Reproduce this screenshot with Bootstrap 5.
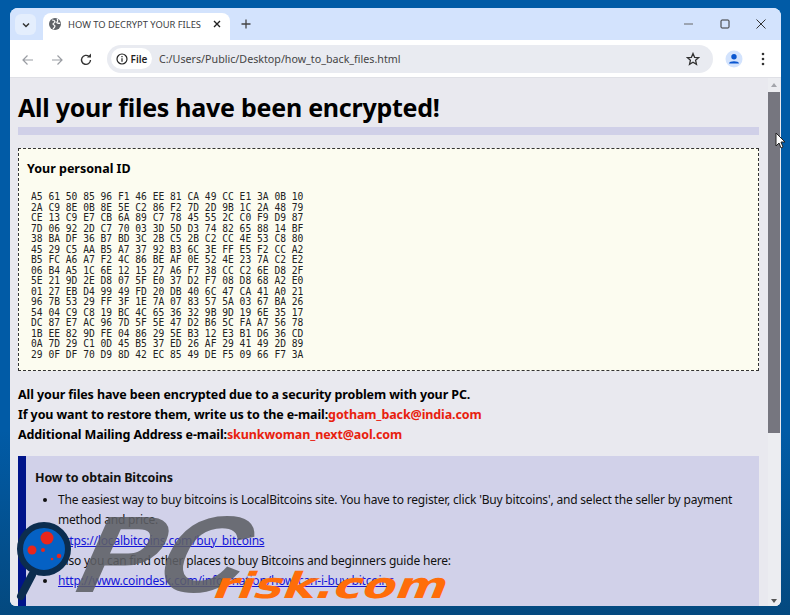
<!DOCTYPE html>
<html lang="en"><head><meta charset="utf-8"><title>HOW TO DECRYPT YOUR FILES</title>
<link rel="stylesheet" href="https://cdn.jsdelivr.net/npm/bootstrap@5.3.0/dist/css/bootstrap.min.css">
<style>
html,body{height:615px;overflow:hidden;margin:0}
body{font-family:"Noto Sans",sans-serif;color:#000}
.desk{width:790px;height:615px;background:linear-gradient(#015ba6 0,#015ba6 70%,#04497f 100%);padding:8px 9px 9px 10px;position:relative}
.winbox{height:598px;border-radius:8px 8px 6px 6px;overflow:hidden;background:#fff}
.tabstrip{height:32px;background:#d3e3fd;position:relative}
.tabsearch{width:21px;height:21px;margin:6px 0 0 5px;border-radius:6px;background:#e4eefd}
.tabshape{width:187px;height:27px;margin:5px 0 0 7px;background:#fff;border-radius:8px 8px 0 0;font:9.35px "Noto Sans",sans-serif;color:#3c4043;gap:7px;padding:0 8px 5px 6px}
.tabtitle{width:137px;white-space:nowrap;overflow:hidden}
.winctl{margin-right:2.5px}
.winctl svg{display:block}
.toolrow{height:37px;background:#fff;padding:0 0 0 11px}
.navico{width:29px}
.omni{width:606px;height:28px;margin-left:-1px;border-radius:14px;background:#e9ebf1;padding:0 13px 0 4px;font:10.7px "Noto Sans",sans-serif;color:#3c4043}
.chipfile{width:41px;height:21px;border-radius:11px;background:#fff;gap:3px;font-weight:600;font-size:10px;color:#1f1f1f;margin-right:7px}
.urltext{color:#444}
.view{height:529px;background:#e9e9ef;border-top:1px solid #dfe0e6}
.pagecol{width:758px;height:528px;padding:0 0 0 8px;overflow:hidden;position:relative}
.scrolltrack{width:12px;background:#ecedf1;position:relative}
.scrollthumb{position:absolute;left:0;right:0;top:14px;height:341px;background:#76767f}
.arrowup,.arrowdn{position:absolute;left:3px;width:0;height:0;border-left:3px solid transparent;border-right:3px solid transparent}
.arrowup{top:5px;border-bottom:4px solid #a3a5ab}
.arrowdn{bottom:3px;border-top:4px solid #555}
.headline{font-size:25px;font-weight:700;line-height:32px;letter-spacing:-.25px;margin:13px 0 0;white-space:nowrap}
.bandrule{height:8px;background:#d0d0e8;margin:4px 0 13px;width:741px}
.idbox{width:741px;height:223px;border:1px dashed #333;background:#fcfcf0;padding:11px 8px}
.idtitle{font-size:12.5px;font-weight:700;line-height:18px;margin:0 0 14px}
.idhex{font:9.65px/10.53px "DejaVu Sans Mono",monospace;margin:0 0 0 4px;color:#222}
.notice{margin:14px 0 11px;font-size:12.5px;letter-spacing:-.11px;font-weight:700;line-height:20px}
.notice span{color:#e8200d}
.howpanel{width:741px;height:150px;background:#d1d1e9;border-left:8px solid #00148a;padding:12px 9px;font-size:12px;letter-spacing:-.19px;line-height:20.3px;color:#111}
.howtitle{font-weight:700;font-size:12.5px;letter-spacing:-.15px;margin:0 0 2px;line-height:20px}
.howlist{margin:0;padding-left:23px}
.howlist a{color:#1515d8}
.wmark{position:absolute;left:0;top:0;width:790px;height:615px;pointer-events:none}
.pcmark{position:absolute;left:60px;top:500px;font:700 109px/109px "Liberation Sans",sans-serif;color:#5e6066;opacity:.88;transform-origin:0 100%;transform:skewX(-24deg) scaleX(1.1)}
.riskmark{position:absolute;left:208px;top:568px;font:700 36px/36px "DejaVu Sans",sans-serif;color:#ff6d0a;transform-origin:0 100%;transform:skewX(-22deg) scaleX(1.35)}
.cursorpic{position:absolute;left:775px;top:132px}
</style></head><body>
<div class="desk">
 <div class="winbox d-flex flex-column">
  <div class="tabstrip d-flex align-items-start">
   <div class="tabsearch d-flex align-items-center justify-content-center"><svg width="10" height="10" viewBox="0 0 10 10"><path d="M2 3.500 5 6.500 8 3.500" fill="none" stroke="#333" stroke-width="1.500"/></svg></div>
   <div class="tabshape d-flex align-items-center">
    <svg width="12" height="12" viewBox="0 0 12 12"><circle cx="6" cy="6" r="6" fill="#5f6368"/><path d="M3 2c2 0 3 1 3 2S4 5 4 6s2 1 2 2-1 2-2 3M8 1c1 1 1 2 0 3s2 2 3 1" fill="none" stroke="#fff" stroke-width="1.200"/></svg>
    <div class="tabtitle">HOW TO DECRYPT YOUR FILES</div>
    <svg width="10" height="10" viewBox="0 0 10 10"><path d="M2 2 8 8M8 2 2 8" stroke="#222" stroke-width="1.400"/></svg>
   </div>
   <svg class="ms-2 mt-2" width="16" height="16" viewBox="0 0 16 16"><path d="M8 3.500v9M3.500 8h9" stroke="#444" stroke-width="1.300"/></svg>
   <div class="winctl d-flex ms-auto mt-2">
    <svg width="36" height="16" viewBox="0 0 36 16"><path d="M13 8h9" stroke="#666" stroke-width="1"/></svg>
    <svg width="36" height="16" viewBox="0 0 36 16"><rect x="14" y="4" width="8" height="8" rx="1" fill="none" stroke="#333"/></svg>
    <svg width="36" height="16" viewBox="0 0 36 16"><path d="M13.500 3.500 22.500 12.500M22.500 3.500 13.500 12.500" stroke="#333"/></svg>
   </div>
  </div>
  <div class="toolrow d-flex align-items-center">
   <div class="navico"><svg width="14" height="14" viewBox="0 0 14 14"><path d="M12 7H2M6.500 2.500 2 7l4.500 4.500" fill="none" stroke="#9a9da3" stroke-width="1.200"/></svg></div>
   <div class="navico"><svg width="14" height="14" viewBox="0 0 14 14"><path d="M2 7h10M7.500 2.500 12 7l-4.500 4.500" fill="none" stroke="#9a9da3" stroke-width="1.200"/></svg></div>
   <div class="navico"><svg width="14" height="14" viewBox="0 0 14 14"><path d="M11.500 7A4.500 4.500 0 1 1 10 3.500" fill="none" stroke="#333" stroke-width="1.400"/><path d="M8 4.500h4v-4z" fill="#333"/></svg></div>
   <div class="omni d-flex align-items-center">
    <div class="chipfile d-flex align-items-center justify-content-center"><svg width="12" height="12" viewBox="0 0 12 12"><circle cx="6" cy="6" r="5" fill="none" stroke="#222" stroke-width="1.200"/><path d="M6 5.200v3.600M6 3v1.200" stroke="#222" stroke-width="1.200"/></svg>File</div>
    <span class="urltext">C:/Users/Public/Desktop/how_to_back_files.html</span>
    <svg class="ms-auto" width="14" height="14" viewBox="0 0 14 14"><path d="M7 1.500 8.600 5.300 12.700 5.600 9.600 8.300 10.500 12.300 7 10.200 3.500 12.300 4.400 8.300 1.300 5.600 5.400 5.300z" fill="none" stroke="#333" stroke-width="1.300"/></svg>
   </div>
   <svg style="margin-left:12px" width="18" height="18" viewBox="0 0 18 18"><circle cx="9" cy="9" r="8.500" fill="#d3e3fd"/><circle cx="9" cy="6.800" r="2.700" fill="#0b57d0"/><path d="M4 13.500c0-3 10-3 10 0z" fill="#0b57d0"/></svg>
   <svg style="margin-left:18px" width="4" height="14" viewBox="0 0 4 14"><circle cx="2" cy="2" r="1.300" fill="#333"/><circle cx="2" cy="7" r="1.300" fill="#333"/><circle cx="2" cy="12" r="1.300" fill="#333"/></svg>
  </div>
  <div class="view d-flex">
   <div class="pagecol">
    <h1 class="headline">All your files have been encrypted!</h1>
    <div class="bandrule"></div>
    <div class="idbox">
     <p class="idtitle">Your personal ID</p>
<pre class="idhex">A5 61 50 85 96 F1 46 EE 81 CA 49 CC E1 3A 0B 10
2A C9 8E 0B 8E 5E C2 86 F2 7D 2D 9B 1C 2A 48 79
CE 13 C9 E7 CB 6A 89 C7 78 45 55 2C C0 F9 D9 87
7D 06 92 2D C7 70 03 3D 5D D3 74 82 65 88 14 BF
38 BA DF 36 B7 BD 3C 2B C5 2B C2 CC 4E 53 C8 80
45 29 C5 AA B5 A7 37 92 B3 6C 3E FF E5 F2 CC A2
B5 FC A6 A7 F2 4C 86 BE AF 0E 52 4E 23 7A C2 E2
06 B4 A5 1C 6E 12 15 27 A6 F7 38 CC C2 6E D8 2F
5E 21 9D 2E D8 07 5F E0 37 D2 F7 08 D8 68 A2 E0
01 27 EB D4 99 49 FD 20 DB 40 6C 47 CA 41 A0 21
96 7B 53 29 FF 3F 1E 7A 07 83 57 5A 03 67 BA 26
54 04 C9 C8 19 BC 4C 65 36 32 9B 9D 19 6E 35 17
DC 87 E7 AC 96 7D 5F 5E 47 D2 B6 5C FA A7 56 78
1B EE 82 9D FE 04 86 29 5E B3 12 E3 B1 D6 36 CD
0A 7D 29 C1 0D 45 B5 37 ED 26 AF 29 41 49 2D 89
29 0F DF 70 D9 8D 42 EC 85 49 DE F5 09 66 F7 3A</pre>
    </div>
    <div class="notice">All your files have been encrypted due to a security problem with your PC.<br>If you want to restore them, write us to the e-mail:<span>gotham_back@india.com</span><br>Additional Mailing Address e-mail:<span>skunkwoman_next@aol.com</span></div>
    <div class="howpanel">
     <p class="howtitle">How to obtain Bitcoins</p>
     <ul class="howlist">
      <li>The easiest way to buy bitcoins is LocalBitcoins site. You have to register, click 'Buy bitcoins', and select the seller by payment method and price.<br><a href="#">https://localbitcoins.com/buy_bitcoins</a><br>Also you can find other places to buy Bitcoins and beginners guide here:</li>
      <li><a href="#">http://www.coindesk.com/information/how-can-i-buy-bitcoins</a></li>
     </ul>
    </div>
   </div>
   <div class="scrolltrack"><i class="arrowup"></i><div class="scrollthumb"></div><i class="arrowdn"></i></div>
  </div>
 </div>
 <div class="wmark">
  <div class="pcmark">PC</div>
  <div class="riskmark">risk.com</div>
  <svg class="position-absolute top-0 start-0" width="120" height="615" viewBox="0 0 120 615"><path d="M32 575 21 596" fill="none" stroke="#0c2d4f" stroke-width="8" stroke-linecap="round"/><circle cx="44" cy="549" r="24" fill="#0561c4" stroke="#0c2d4f" stroke-width="6"/><circle cx="47" cy="538" r="6.500" fill="#e8261c"/><circle cx="32" cy="550" r="4.500" fill="#e8261c"/><circle cx="43" cy="550" r="2" fill="#e8261c"/><circle cx="59" cy="556" r="2.300" fill="#e8261c"/><circle cx="52" cy="559" r="1.300" fill="#e8261c"/></svg>
  <svg class="cursorpic" width="12" height="18" viewBox="0 0 12 18"><path d="M1 1v13l3-3 2 5 2-1-2-5h4z" fill="#fff" stroke="#222"/></svg>
 </div>
</div>
</body></html>
